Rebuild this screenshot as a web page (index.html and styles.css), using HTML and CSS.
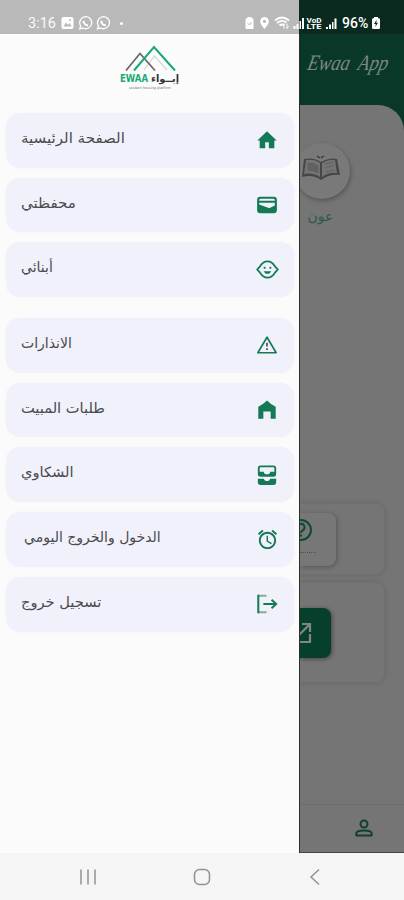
FILE: index.html
```html
<!DOCTYPE html>
<html lang="ar">
<head>
<meta charset="utf-8">
<title>Ewaa App</title>
<link rel="stylesheet" href="styles.css">
</head>
<body>
<div class="screen">
  <div class="status">
    <span class="time">3:16</span>
    <svg class="notifs" width="56" height="14" viewBox="0 0 56 14">
      <rect x="0.5" y="1" width="12" height="12" rx="2" fill="#fff"/>
      <path d="M2.500 10.500l2.500-4 2 2.500 1.500-2 2.200 3.500z" fill="#b9b9b9"/><circle cx="9" cy="4" r="1" fill="#b9b9b9"/>
      <g fill="none" stroke="#fff" stroke-width="1.300">
        <path d="M18.700 12.800l1-2.800a6 6 0 1 1 2.200 2z"/><path d="M36.500 12.800l1-2.800a6 6 0 1 1 2.200 2z"/>
        <path d="M22.500 4.800c0 2.500 2 4.500 4.500 4.700M40.300 4.800c0 2.500 2 4.500 4.500 4.700" stroke-width="2"/>
      </g>
    </svg>
    <span class="dot"></span>
    <svg class="sys" width="94" height="14" viewBox="0 0 94 14" fill="#fff">
      <path d="M1.500 3.500q0-1.500 2-1.500V1h4v1q2 0 2 1.500V12q0 1-1 1h-6q-1 0-1-1z"/><path d="M3.500 7l2 2 2-3" fill="none" stroke="#b9b9b9"/>
      <path d="M20.500 1a4.300 4.300 0 0 0-4.300 4.300C16.200 8.500 20.500 13 20.500 13s4.300-4.500 4.300-7.700A4.300 4.300 0 0 0 20.500 1zm0 2.800a1.600 1.600 0 1 1 0 3.200 1.600 1.600 0 0 1 0-3.200z"/>
      <path d="M31 4.500q7-6 14 0M33 7q5-4 9.500-.5M35.500 9.500q2.500-2 4.500 0" fill="none" stroke="#fff" stroke-width="1.800"/><path d="M40 12.500V7.500l-1.500 2M43 7.500v5l1.500-2" fill="none" stroke="#fff"/>
      <path d="M49.500 10h2v3h-2zM52.500 8h2v5h-2zM55.500 5h1.500v8h-1.500zM58 2h2v11h-2z"/>
      <text x="62.500" y="7" class="lte" textLength="15" lengthAdjust="spacingAndGlyphs">VoD</text><text x="62.500" y="13.300" class="lte" textLength="15" lengthAdjust="spacingAndGlyphs">LTE</text>
      <path d="M82 11h2v2h-2zM85 8.500h2V13h-2zM88 6h1.500v7H88zM90.500 2.500h2V13h-2z"/>
    </svg>
    <span class="pct">96%</span>
    <svg class="batt" width="10" height="14" viewBox="0 0 10 14"><path d="M1 3.500Q1 2 3 2V1h4v1q2 0 2 1.500V12q0 1-1 1H2q-1 0-1-1z" fill="#fff"/><path d="M5.800 3.500L3 8h1.800l-.5 3L7 6.800H5.200z" fill="#0b2e22"/></svg>
  </div>

  <div class="main">
    <aside class="drawer">
      <svg class="logo" width="62" height="50" viewBox="0 0 62 50">
        <g fill="none" stroke-width="1.700">
          <path d="M24 26L34.500 12 47 26" stroke="#d5d7d6" stroke-width="1.200"/>
          <path d="M6 26.500L20 9.500 35 26.500" stroke="#666"/>
          <path d="M14 26.500L34 3 55 26.500" stroke="#19a974" stroke-width="2"/>
        </g>
        <text x="0" y="38" class="logo-en" textLength="28" lengthAdjust="spacingAndGlyphs">EWAA</text>
        <text x="31" y="38" class="logo-ar" textLength="28" lengthAdjust="spacingAndGlyphs">إيــواء</text>
        <text x="9" y="44.500" class="logo-sub" textLength="42" lengthAdjust="spacingAndGlyphs">student housing platform</text>
      </svg>

      <nav class="menu">
        <a class="item"><span class="label wide" dir="rtl">الصفحة الرئيسية</span>
          <svg class="icon" viewBox="0 0 24 24"><path d="M10 21v-6.500h4V21h6v-8.500h2.500L12 2.500 1.500 12.500H4V21z"/></svg></a>
        <a class="item"><span class="label wide" dir="rtl">محفظتي</span>
          <svg class="icon" viewBox="0 0 24 24"><rect x="1.200" y="3" width="21.600" height="18" rx="3.500"/><path d="M3.500 6.500q0-1.200 1.500-1.200h14q1.500 0 1.500 1.200v.8h-17zM3.500 9.500h17v3l-5 2.500q-1.500.6-3-.2l-9-3.300z" fill="#f0f1fa"/></svg></a>
        <a class="item"><span class="label" dir="rtl">أبنائي</span>
          <svg class="icon face" viewBox="0 0 24 24"><path d="M4 9C6 5.300 8.800 3.500 12 3.500S18 5.300 20 9l2.800 3L20 15c-2 3.700-4.800 5.500-8 5.500S6 18.700 4 15l-2.800-3z" fill="none" stroke="#147a55" stroke-width="1.900" stroke-linejoin="round"/><circle cx="9" cy="10.300" r="1.100"/><circle cx="15" cy="10.300" r="1.100"/><path d="M8 13.700h8c-.8 1.700-2.300 2.800-4 2.800s-3.200-1.100-4-2.800z"/></svg></a>
        <a class="item second"><span class="label" dir="rtl">الانذارات</span>
          <svg class="icon" viewBox="0 0 24 24"><path d="M12 3.500L2 20.500h20z" fill="none" stroke="#147a55" stroke-width="1.800" stroke-linejoin="round"/><path d="M11.200 9.500h1.600v4h-1.600zM11.200 15.500h1.600v2h-1.600z" fill="#333"/></svg></a>
        <a class="item"><span class="label mid" dir="rtl">طلبات المبيت</span>
          <svg class="icon" viewBox="0 0 24 24"><path d="M2.500 21.500v-13Q8 5.500 12 1.500q4 4 9.500 7v13H16v-8H8v8z"/></svg></a>
        <a class="item"><span class="label mid" dir="rtl">الشكاوي</span>
          <svg class="icon" viewBox="0 0 24 24"><path d="M19 1.500H5a3 3 0 0 0-3 3v6.500a3 3 0 0 0 3 3h14a3 3 0 0 0 3-3V4.500a3 3 0 0 0-3-3zM4 8.500v-4q0-1 1-1h14q1 0 1 1v4h-4.500c0 2-1.700 2.800-3.500 2.800s-3.500-.8-3.500-2.800zM2 16h6.500c.5 1.500 1.800 2.500 3.500 2.500s3-1 3.500-2.500H22v4a3 3 0 0 1-3 3H5a3 3 0 0 1-3-3z" fill-rule="evenodd"/></svg></a>
        <a class="item"><span class="label daily" dir="rtl">الدخول والخروج اليومي</span>
          <svg class="icon alarm" viewBox="0 0 24 24"><path d="M22 5.720l-4.600-3.860-1.290 1.530 4.600 3.860L22 5.720zM7.880 3.390L6.600 1.860 2 5.710l1.290 1.530 4.590-3.850zM12.500 8H11v6l4.750 2.850.75-1.230-4-2.370V8zM12 4c-4.970 0-9 4.030-9 9s4.020 9 9 9c4.970 0 9-4.030 9-9s-4.030-9-9-9zm0 16c-3.870 0-7-3.130-7-7s3.130-7 7-7 7 3.130 7 7-3.130 7-7 7z"/></svg></a>
        <a class="item"><span class="label mid" dir="rtl">تسجيل خروج</span>
          <svg class="icon line" viewBox="0 0 24 24"><path d="M11.500 3H2.500M2.500 21h9" stroke="#7fae9b"/><path d="M2.500 2v20M8 12h14M17 7.300l5 4.700-5 4.700"/></svg></a>
      </nav>
    </aside>

    <section class="page">
      <header class="appbar"><span>Ewaa App</span></header>
      <div class="sheet">
        <div class="avatar">
          <svg width="42" height="30" viewBox="0 0 42 30"><path d="M4 6q10-2 17 3 8-5 16-3l3 16q-11-1-19 5-8-6-19-3z" fill="#464646"/><path d="M6 7q9-1 14 3v14Q13 19 4 21zM22 10q7-4 13-3l2 13q-8-1-15 4z" fill="#747474"/><path d="M8 10q6 0 10 3v7q-5-3-10-3zM25 11l8-2M25 15l9-3M26 19l9-2" fill="#626262" stroke="#606060"/><path d="M17 3l3 2M21 5l3-2" stroke="#3a3a3a" stroke-width="1.500"/></svg>
        </div>
        <div class="aoun" dir="rtl">عون</div>
        <div class="card faq">
          <div class="tile">
            <svg width="24" height="24" viewBox="0 0 24 24" fill="none" stroke="#0b4a34" stroke-width="2"><circle cx="12" cy="12" r="10"/><path d="M8.500 9.500a3.500 3.500 0 1 1 5 3q-1.500 1-1.500 2.500M12 16.500v2"/></svg>
            <span class="lines"></span>
          </div>
        </div>
        <div class="card exit">
          <div class="button"><svg width="24" height="24" viewBox="0 0 24 24" fill="none" stroke="#808683" stroke-width="2.200"><path d="M10 3H3v18h18v-8M13 3h8v8M21 3L7 17"/></svg></div>
        </div>
        <footer class="tabs"><svg width="20" height="20" viewBox="0 0 20 20" fill="none" stroke="#123f30" stroke-width="2"><circle cx="10" cy="6" r="3.500"/><path d="M2.300 17.500v-2q0-3 7.700-3t7.700 3v2z" stroke-linejoin="round"/></svg></footer>
      </div>
    </section>
  </div>

  <div class="navbar">
    <svg width="18" height="18" viewBox="0 0 18 18"><path d="M2 1.500v15M9 1.500v15M16 1.500v15"/></svg>
    <svg width="18" height="18" viewBox="0 0 18 18"><rect x="1.500" y="1.500" width="15" height="15" rx="5"/></svg>
    <svg width="18" height="18" viewBox="0 0 18 18"><path d="M13 1.500L5 9l8 7.500"/></svg>
  </div>
</div>
</body>
</html>
```
FILE: styles.css
```css
* { box-sizing: border-box; }
body { margin: 0; font-family: "DejaVu Sans", sans-serif; }
.screen { width: 404px; height: 900px; display: flex; flex-direction: column; overflow: hidden; background: #f5f5f5; }

.status { height: 34px; flex: none; display: flex; align-items: center; padding: 12px 0 0 28px; color: #fff; font-family: Roboto, sans-serif; background: linear-gradient(90deg, #b9b9b9 299px, #0a2a1f 299px); }
.time { width: 33px; font-size: 14.500px; opacity: .95; }
.dot { width: 3px; height: 3px; margin-left: 3px; border-radius: 50%; background: #fff; }
.sys { margin-left: 121px; }
.lte { font: 700 7px Roboto, sans-serif; }
.pct { margin-left: 4px; width: 28px; font-size: 14px; font-weight: 500; white-space: nowrap; }
.batt { margin-left: 1px; }

.main { flex: none; height: 819px; display: grid; grid-template-columns: 299px 105px; }
.drawer { background: #fbfbfb; padding: 10px 5px 0 6px; overflow: hidden; }
.logo { display: block; margin-left: 114px; }
.logo-en { font: 700 10px "DejaVu Sans", sans-serif; fill: #19a974; }
.logo-ar { font: 700 10px "DejaVu Sans", sans-serif; fill: #333; }
.logo-sub { font: 3.500px "DejaVu Sans", sans-serif; fill: #777; }
.menu { margin-top: 19px; display: flex; flex-direction: column; gap: 10px; }
.item { height: 54.700px; flex: none; border-radius: 14px; background: #f0f1fa; display: flex; align-items: center; justify-content: space-between; padding: 0 16px 0 15px; box-shadow: 0 0 3px #f4f5fb; }
.item.second { margin-top: 11px; }
.label { font-size: 14px; line-height: 20px; margin-bottom: 5px; color: #4a4a4e; white-space: nowrap; transform-origin: left center; }
.wide { transform: scaleX(1.075); }
.mid { transform: scaleX(1.045); }
.daily { margin-left: 3px; }
.icon { width: 22px; height: 22px; fill: #147a55; }
.face, .alarm { width: 23px; height: 23px; margin-right: -1px; }
.line { fill: none; stroke: #147a55; stroke-width: 2.200; }

.page { background: #0a3828; overflow: hidden; border-left: 1px solid #2b2f2d; }
.appbar { height: 71px; padding: 15px 0 0 8px; font: italic 22px/28px "Liberation Serif", serif; color: #7c8982; white-space: nowrap; }
.appbar span { display: inline-block; transform-origin: left center; transform: scaleX(.84) skewX(-14deg); word-spacing: 5px; }
.sheet { height: 748px; background: #757575; border-top-right-radius: 26px; display: flex; flex-direction: column; }
.avatar { width: 56px; height: 56px; margin: 38px 0 0 -6px; flex: none; border-radius: 50%; background: #797979; box-shadow: 1px 2px 4px #555; display: flex; align-items: center; justify-content: center; }
.avatar svg { margin: -6px 0 0 -3px; }
.aoun { font-size: 14px; line-height: 20px; width: 41px; margin-top: 7px; text-align: center; color: #2c5948; }
.card { flex: none; width: 85px; border: 1px solid #707070; border-left: 0; border-radius: 0 9px 9px 0; box-shadow: 0 0 4px #646464; }
.faq { height: 72px; margin-top: 277px; padding-top: 9px; }
.tile { width: 36px; height: 53px; border-radius: 0 8px 8px 0; background: #777; box-shadow: 1px 1px 4px #555; padding-top: 5px; }
.tile svg { display: block; margin-left: -11px; }
.lines { display: block; width: 16px; margin-top: 10px; border-top: 1px dotted #505050; }
.exit { height: 101px; margin-top: 7px; padding-top: 25px; }
.button { width: 31px; height: 50px; border-radius: 0 8px 8px 0; background: #06402d; box-shadow: 1px 1px 4px #444; display: flex; align-items: center; }
.button svg { flex: none; margin-left: -11px; }
.tabs { margin-top: auto; height: 49px; border-top: 1px solid #6b6b6b; border-bottom: 1px solid #444; padding: 13px 0 0 54px; }

.navbar { flex: 1; display: flex; align-items: center; justify-content: space-between; padding: 0 80px 0 79px; }
.navbar svg { fill: none; stroke: #929292; stroke-width: 1.500; }
```
